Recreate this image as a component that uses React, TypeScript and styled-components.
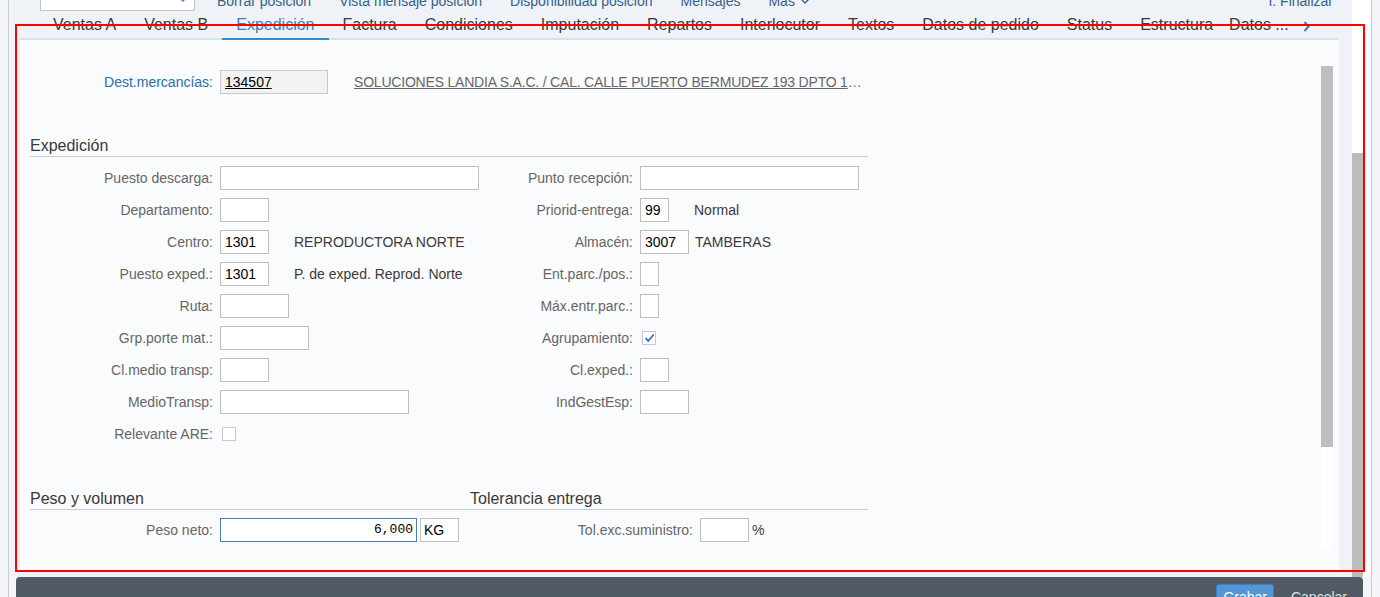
import React from 'react';
import styled, { createGlobalStyle } from 'styled-components';

const Global = createGlobalStyle`
  html, body { margin: 0; padding: 0; }
  body {
    background: #f3f5f8;
    font-family: "Liberation Sans", Arial, sans-serif;
    width: 1380px;
    height: 597px;
    overflow: hidden;
  }
`;

const Page = styled.div`
  position: relative;
  width: 1380px;
  height: 597px;
  overflow: hidden;
`;

const Shell = styled.div`
  margin-left: 8px;
  width: 1362px;
  height: 597px;
  border-left: 1px solid #c9cdd2;
  border-right: 1px solid #c9cdd2;
  display: flex;
  flex-direction: column;
`;

const Upper = styled.div`
  display: flex;
  height: 577px;
  flex: none;
`;

const MainColumn = styled.div`
  width: 1343px;
  background: #eff3f7;
  display: flex;
  flex-direction: column;
`;

const OuterScroll = styled.div`
  width: 19px;
  background: #ffffff;
`;

const OuterThumb = styled.div`
  margin-top: 153px;
  width: 11px;
  height: 424px;
  background: #bcbcbc;
`;

/* ---------- toolbar ---------- */
const Toolbar = styled.div`
  margin-top: -11px;
  height: 26px;
  flex: none;
  display: flex;
  align-items: center;
  padding: 0 5px 0 31px;
`;

const SelectBox = styled.div`
  align-self: flex-start;
  margin-top: -2px;
  margin-right: 8px;
  width: 155px;
  height: 24px;
  box-sizing: border-box;
  background: #fff;
  border: 1px solid #bfc3c8;
  display: flex;
  align-items: center;
  justify-content: flex-end;
  padding-right: 6px;
`;

const ToolLink = styled.span`
  font-size: 14px;
  line-height: 24px;
  padding: 0 14px 2px;
  color: #346187;
  white-space: nowrap;
  display: flex;
  align-items: center;
  gap: 5px;
`;

const Spacer = styled.div`
  flex: 1;
`;

/* ---------- tabs ---------- */
const TabStrip = styled.div`
  margin: 0 13px 0 11px;
  flex: none;
  display: flex;
  align-items: flex-end;
  border-bottom: 2px solid #d5e2ee;
  padding-left: 19px;
`;

const Tab = styled.div<{ $active?: boolean; $tight?: boolean }>`
  font-size: 16px;
  line-height: 18px;
  padding: 1px 14px 4px ${(p) => (p.$tight ? '2px' : '14px')};
  color: ${(p) => (p.$active ? '#3f7db4' : '#3a3a3a')};
  white-space: nowrap;
  border-bottom: ${(p) => (p.$active ? '2px solid #2f8bd2' : 'none')};
  margin-bottom: ${(p) => (p.$active ? '-2px' : '0')};
`;

const TabOverflow = styled.div`
  padding: 0 0 6px 0;
  display: flex;
  align-items: flex-end;
`;

/* ---------- content ---------- */
const ContentPanel = styled.div`
  margin: 0 13px 5px 11px;
  flex: 1;
  background: #fafbfd;
  display: flex;
  overflow: hidden;
`;

const Form = styled.div`
  flex: 1;
  padding: 26px 0 0 10px;
`;

const InnerTrack = styled.div`
  margin: 26px 6px 0 0;
  width: 12px;
  height: 482px;
  background: #ffffff;
`;

const InnerThumb = styled.div`
  width: 12px;
  height: 381px;
  background: #bdbdbd;
`;

const DestRow = styled.div`
  display: flex;
  align-items: center;
  height: 32px;
`;

const SectionHeader = styled.div<{ $gapTop: number }>`
  margin-top: ${(p) => p.$gapTop}px;
  width: 838px;
  display: flex;
  font-size: 16px;
  line-height: 20px;
  color: #383838;
  border-bottom: 1px solid #cccccc;
`;

const SectionTitle = styled.div<{ $w?: number }>`
  width: ${(p) => (p.$w ? `${p.$w}px` : 'auto')};
`;

const FieldGrid = styled.div<{ $cols: string; $gapTop: number }>`
  margin-top: ${(p) => p.$gapTop}px;
  width: 838px;
  display: grid;
  grid-template-columns: ${(p) => p.$cols};
  grid-auto-rows: 32px;
`;

const Row = styled.div`
  display: flex;
  align-items: center;
  min-width: 0;
`;

const Label = styled.div<{ $w?: number; $link?: boolean }>`
  width: ${(p) => p.$w ?? 183}px;
  margin-right: 7px;
  flex: none;
  text-align: right;
  font-size: 14px;
  white-space: nowrap;
  color: ${(p) => (p.$link ? '#2b6fae' : '#666666')};
`;

const FieldSlot = styled.div<{ $min: number }>`
  min-width: ${(p) => p.$min}px;
  display: flex;
  align-items: center;
`;

const Input = styled.div<{ $w: number; $readonly?: boolean; $focused?: boolean; $mono?: boolean }>`
  width: ${(p) => p.$w}px;
  height: 24px;
  box-sizing: border-box;
  flex: none;
  background: ${(p) => (p.$readonly ? '#f2f2f2' : '#ffffff')};
  border: 1px solid ${(p) => (p.$focused ? '#4a7eb3' : p.$readonly ? '#cacaca' : '#bfbfbf')};
  padding: ${(p) => (p.$mono ? '0 3px 0 4px' : '0 4px')};
  font-family: ${(p) => (p.$mono ? '"Liberation Mono", "Courier New", monospace' : '"Liberation Sans", Arial, sans-serif')};
  font-size: ${(p) => (p.$mono ? '13px' : '14px')};
  line-height: 22px;
  text-align: ${(p) => (p.$mono ? 'right' : 'left')};
  color: #000000;
  white-space: nowrap;
  overflow: hidden;
`;

const UnitBox = styled.div`
  margin-left: 3px;
  width: 39px;
  height: 24px;
  box-sizing: border-box;
  border: 1px solid #bfbfbf;
  background: #ffffff;
  padding-left: 3px;
  font-size: 14px;
  line-height: 22px;
  color: #000;
`;

const Underlined = styled.span`
  text-decoration: underline;
`;

const Desc = styled.div`
  margin-left: 6px;
  font-size: 14px;
  color: #3a3a3a;
  white-space: nowrap;
`;

const PartnerText = styled.div`
  margin-left: 26px;
  font-size: 14px;
  letter-spacing: -0.2px;
  color: #666666;
  white-space: nowrap;
`;

const Suffix = styled.span`
  margin-left: 3px;
  font-size: 14px;
  color: #3a3a3a;
`;

const CheckBox = styled.div`
  margin-left: 2px;
  width: 14px;
  height: 14px;
  box-sizing: border-box;
  border: 1px solid #c5c8d8;
  background: #fff;
  display: flex;
  align-items: center;
  justify-content: center;
`;

/* ---------- footer ---------- */
const Footer = styled.div`
  margin-left: 7px;
  width: 1347px;
  height: 42px;
  box-sizing: border-box;
  flex: none;
  background: #505a64;
  border-radius: 4px 4px 0 0;
  display: flex;
  justify-content: flex-end;
  align-items: flex-start;
  padding: 7px 8px 0 0;
  gap: 9px;
`;

const FooterButton = styled.div<{ $primary?: boolean }>`
  height: 26px;
  box-sizing: border-box;
  padding: 0 ${(p) => (p.$primary ? '6px' : '7px')};
  border-radius: 3px;
  font-size: 14px;
  line-height: 24px;
  color: ${(p) => (p.$primary ? '#ffffff' : '#dfe3e8')};
  background: ${(p) => (p.$primary ? '#5596d6' : 'transparent')};
  border: 1px solid ${(p) => (p.$primary ? '#3d7fc2' : 'transparent')};
`;

const Annotation = styled.div`
  position: absolute;
  left: 15px;
  top: 24px;
  width: 1350px;
  height: 548px;
  box-sizing: border-box;
  border: 2px solid #ff0000;
  pointer-events: none;
`;

/* ---------- icons ---------- */
const ChevronDown = ({ color = '#5b7fa6' }: { color?: string }) => (
  <svg width="10" height="6" viewBox="0 0 10 6">
    <path d="M1 1 L5 5 L9 1" fill="none" stroke={color} strokeWidth="1.3" />
  </svg>
);

const ChevronRight = () => (
  <svg width="7" height="11" viewBox="0 0 7 11">
    <path d="M1.5 1 L5.5 5.5 L1.5 10" fill="none" stroke="#3f7db4" strokeWidth="2" />
  </svg>
);

const Check = () => (
  <svg width="11" height="10" viewBox="0 0 11 10">
    <path d="M1.5 5.2 L4.2 8 L9.8 1.5" fill="none" stroke="#2f6db2" strokeWidth="1.8" />
  </svg>
);

/* ---------- data ---------- */
type Field =
  | { label: string; kind: 'input'; w: number; value?: string; desc?: string }
  | { label: string; kind: 'check'; checked?: boolean }
  | null;

const leftFields: Field[] = [
  { label: 'Puesto descarga:', kind: 'input', w: 259 },
  { label: 'Departamento:', kind: 'input', w: 49 },
  { label: 'Centro:', kind: 'input', w: 49, value: '1301', desc: 'REPRODUCTORA NORTE' },
  { label: 'Puesto exped.:', kind: 'input', w: 49, value: '1301', desc: 'P. de exped. Reprod. Norte' },
  { label: 'Ruta:', kind: 'input', w: 69 },
  { label: 'Grp.porte mat.:', kind: 'input', w: 89 },
  { label: 'Cl.medio transp:', kind: 'input', w: 49 },
  { label: 'MedioTransp:', kind: 'input', w: 189 },
  { label: 'Relevante ARE:', kind: 'check' },
];

const rightFields: Field[] = [
  { label: 'Punto recepción:', kind: 'input', w: 219 },
  { label: 'Priorid-entrega:', kind: 'input', w: 29, value: '99', desc: 'Normal' },
  { label: 'Almacén:', kind: 'input', w: 49, value: '3007', desc: 'TAMBERAS' },
  { label: 'Ent.parc./pos.:', kind: 'input', w: 19 },
  { label: 'Máx.entr.parc.:', kind: 'input', w: 19 },
  { label: 'Agrupamiento:', kind: 'check', checked: true },
  { label: 'Cl.exped.:', kind: 'input', w: 29 },
  { label: 'IndGestEsp:', kind: 'input', w: 49 },
  null,
];

const tabs = [
  'Ventas A', 'Ventas B', 'Expedición', 'Factura', 'Condiciones', 'Imputación', 'Repartos',
  'Interlocutor', 'Textos', 'Datos de pedido', 'Status', 'Estructura',
];

const FieldRow = ({ f, slot }: { f: Field; slot: number }) => {
  if (!f) return <Row />;
  return (
    <Row>
      <Label>{f.label}</Label>
      {f.kind === 'check' ? (
        <CheckBox>{f.checked && <Check />}</CheckBox>
      ) : (
        <>
          <FieldSlot $min={f.desc ? slot : 0}>
            <Input $w={f.w}>{f.value}</Input>
          </FieldSlot>
          {f.desc && <Desc>{f.desc}</Desc>}
        </>
      )}
    </Row>
  );
};

export default function App() {
  const cells: React.ReactNode[] = [];
  leftFields.forEach((lf, i) => {
    cells.push(<FieldRow key={`l${i}`} f={lf} slot={68} />);
    cells.push(<FieldRow key={`r${i}`} f={rightFields[i]} slot={48} />);
  });

  return (
    <Page>
      <Global />
      <Shell>
        <Upper>
          <MainColumn>
            <Toolbar>
              <SelectBox>
                <ChevronDown />
              </SelectBox>
              <ToolLink>Borrar posición</ToolLink>
              <ToolLink>Vista mensaje posición</ToolLink>
              <ToolLink>Disponibilidad posición</ToolLink>
              <ToolLink>Mensajes</ToolLink>
              <ToolLink>
                Más <ChevronDown color="#346187" />
              </ToolLink>
              <Spacer />
              <ToolLink>I. Finalizar</ToolLink>
            </Toolbar>

            <TabStrip>
              {tabs.map((t) => (
                <Tab key={t} $active={t === 'Expedición'}>
                  {t}
                </Tab>
              ))}
              <Tab $tight>Datos ...</Tab>
              <TabOverflow>
                <ChevronRight />
              </TabOverflow>
            </TabStrip>

            <ContentPanel>
              <Form>
                <DestRow>
                  <Label $link>Dest.mercancías:</Label>
                  <Input $w={108} $readonly>
                    <Underlined>134507</Underlined>
                  </Input>
                  <PartnerText>
                    <Underlined>SOLUCIONES LANDIA S.A.C. / CAL. CALLE PUERTO BERMUDEZ 193 DPTO 1</Underlined>…
                  </PartnerText>
                </DestRow>

                <SectionHeader $gapTop={38}>
                  <SectionTitle>Expedición</SectionTitle>
                </SectionHeader>
                <FieldGrid $cols="420px 418px" $gapTop={5}>
                  {cells}
                </FieldGrid>

                <SectionHeader $gapTop={39}>
                  <SectionTitle $w={440}>Peso y volumen</SectionTitle>
                  <SectionTitle>Tolerancia entrega</SectionTitle>
                </SectionHeader>
                <FieldGrid $cols="440px 398px" $gapTop={4}>
                  <Row>
                    <Label>Peso neto:</Label>
                    <Input $w={197} $focused $mono>
                      6,000
                    </Input>
                    <UnitBox>KG</UnitBox>
                  </Row>
                  <Row>
                    <Label $w={223}>Tol.exc.suministro:</Label>
                    <Input $w={49} />
                    <Suffix>%</Suffix>
                  </Row>
                </FieldGrid>
              </Form>
              <InnerTrack>
                <InnerThumb />
              </InnerTrack>
            </ContentPanel>
          </MainColumn>
          <OuterScroll>
            <OuterThumb />
          </OuterScroll>
        </Upper>
        <Footer>
          <FooterButton $primary>Grabar</FooterButton>
          <FooterButton>Cancelar</FooterButton>
        </Footer>
      </Shell>
      <Annotation />
    </Page>
  );
}
